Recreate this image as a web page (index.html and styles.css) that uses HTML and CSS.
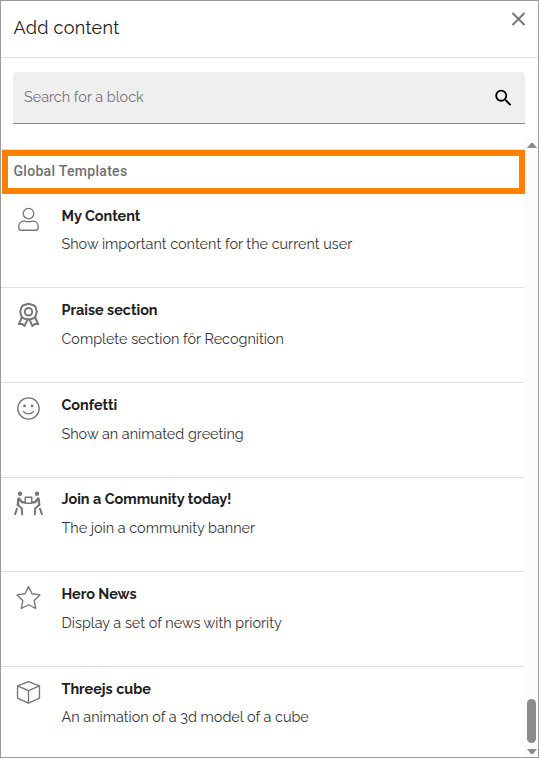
FILE: index.html
```
<!DOCTYPE html>
<html lang="en">
<head>
<meta charset="utf-8">
<title>Add content</title>
<link rel="stylesheet" href="styles.css">
</head>
<body>
<div class="dialog">
  <header class="header">
    <h1>Add content</h1>
    <svg class="close" viewBox="0 0 14 14"><path d="M1 1l12 12M13 1L1 13"/></svg>
  </header>
  <div class="search">
    <span class="placeholder">Search for a block</span>
    <svg class="search-icon" viewBox="0 0 24 24"><path d="M15.5 14h-.79l-.28-.27A6.47 6.47 0 0 0 16 9.5 6.5 6.5 0 1 0 9.5 16c1.61 0 3.09-.59 4.23-1.57l.27.28v.79l5 4.99L20.49 19l-4.99-5zm-6 0a4.5 4.5 0 1 1 0-9 4.5 4.5 0 0 1 0 9z"/></svg>
  </div>
  <div class="body">
    <main class="list">
      <div class="group">Global Templates</div>
      <section class="row">
        <svg class="icon" viewBox="0 0 28 24"><circle cx="14" cy="6.3" r="5.1"/><path d="M9.3 13.6h1.1c2.4 1 4.8 1 7.2 0h1.1c2.6 0 4.6 2.2 4.6 5v1.7c0 1.3-.8 2.1-2.1 2.1H6.8c-1.3 0-2.1-.8-2.1-2.1v-1.7c0-2.8 2-5 4.6-5z"/></svg>
        <div><h2>My Content</h2><p>Show important content for the current user</p></div>
      </section>
      <section class="row">
        <svg class="icon bold" viewBox="0 0 28 24"><path d="M14 1.6l2.5.7 2.5.7 1.8 1.8.6 2.3.6 2.3-.6 2.3-.6 2.2-1.8 1.7-2.5.7-2.5.6-2.5-.6-2.5-.7-1.8-1.7-.6-2.2L6 9.4l.6-2.3.6-2.300L9 3l2.500-.7z"/><circle cx="14" cy="9.400" r="3.600"/><path d="M7.600 14.900l-2.900 6.300 3.300-.1 2.200 2.100 2.800-6.300M20.400 14.900l2.900 6.300-3.300-.1-2.200 2.100-2.800-6.300"/></svg>
        <div><h2>Praise section</h2><p>Complete section för Recognition</p></div>
      </section>
      <section class="row">
        <svg class="icon" viewBox="0 0 28 24"><circle cx="14" cy="12" r="10.300"/><path d="M9.300 15c2.400 3 7 3 9.400 0"/><circle class="solid" cx="10.200" cy="9.500" r="1.300"/><circle class="solid" cx="17.500" cy="9.500" r="1.300"/></svg>
        <div><h2>Confetti</h2><p>Show an animated greeting</p></div>
      </section>
      <section class="row">
        <svg class="icon people" viewBox="0 0 28 24"><circle class="solid" cx="5.800" cy="2.600" r="2.100"/><circle class="solid" cx="22.200" cy="2.600" r="2.100"/><path class="torso" d="M4.200 7.500L3.700 13.300M4.800 7.200l3 3.700h2.200M23.800 7.500l.5 5.800M23.200 7.200l-3 3.700H18"/><path class="legs" d="M3.700 13.500l3.800 3.200.4 5.800M2.800 17l-1.700 5.300M24.300 13.500l-3.800 3.200-.4 5.800M25.200 17l1.700 5.300"/><path d="M10.900 6h6.200v5.700h-6.200z"/></svg>
        <div><h2>Join a Community today!</h2><p>The join a community banner</p></div>
      </section>
      <section class="row">
        <svg class="icon" viewBox="0 0 28 24"><path d="M14 1.500l3.400 6.900 7.700 1.100-5.600 5.400 1.400 7.700-6.900-3.600-6.900 3.600 1.400-7.700-5.600-5.400 7.700-1.100z"/></svg>
        <div><h2>Hero News</h2><p>Display a set of news with priority</p></div>
      </section>
      <section class="row">
        <svg class="icon" viewBox="0 0 28 24"><path d="M14 1.500l10.600 4.100v11.800L14 22.300 3.400 17.400V5.600zM3.400 5.600L14 10.300l10.600-4.700M14 10.300v12"/></svg>
        <div><h2>Threejs cube</h2><p>An animation of a 3d model of a cube</p></div>
      </section>
    </main>
    <div class="scrollbar">
      <svg viewBox="0 0 10 5"><path d="M0 5L4 0h2l4 5z"/></svg>
      <div class="thumb"></div>
      <svg viewBox="0 0 10 5"><path d="M0 0l4 5h2l4-5z"/></svg>
    </div>
  </div>
</div>
</body>
</html>
```
FILE: styles.css
```
* { box-sizing: border-box; }
body { margin: 0; font-family: Raleway, Lato, "Open Sans", sans-serif; color: #212121; background: #fff; }
h1, h2, p { margin: 0; white-space: nowrap; }
.dialog { width: 539px; height: 758px; border: 1px solid #9b9b9b; display: flex; flex-direction: column; overflow: hidden; }
.header { height: 57px; flex: none; border-bottom: 1px solid #dedede; padding: 0 13px 0 12.5px; display: flex; justify-content: space-between; }
h1 { font-size: 18px; line-height: 22px; font-weight: 400; padding-top: 16px; letter-spacing: .3px; }
.close { width: 15px; height: 14px; margin: 11px -1px 0 0; fill: none; stroke: #767676; stroke-width: 2; }
.search { height: 52px; flex: none; margin: 14px 13px 13px 12px; padding: 0 10px 0 11px; background: #efefef; border-bottom: 1px solid #8c8c8c; border-radius: 4px 4px 0 0; display: flex; align-items: center; justify-content: space-between; }
.placeholder { font-size: 14.4px; color: #757575; padding-bottom: 2px; }
.search-icon { width: 23px; height: 22px; }
.body { flex: 1; min-height: 0; display: flex; }
.list { width: 523px; flex: none; padding-top: 12px; display: flex; flex-direction: column; }
.group { height: 44px; flex: none; margin: 1px -1px -.25px 1px; border: 6px solid #ff8000; padding-left: 5.5px; font: 500 14px/31px Roboto, sans-serif; letter-spacing: .3px; color: #707070; box-shadow: 0 -1px #dedede; position: relative; z-index: 1; }
.row { height: 94.6px; flex: none; border-bottom: 1px solid #dedede; padding: 12.8px 0 0 13px; display: flex; gap: 18.5px; }
.row:last-child { border-bottom: 0; height: 88px; }
.icon { width: 29px; height: 25px; flex: none; margin-top: .4px; fill: none; stroke: #767676; stroke-width: 1.3; stroke-linejoin: round; stroke-linecap: round; }
.bold { stroke-width: 1.9; }
.solid { fill: #767676; stroke: none; }
.people { stroke-width: 1.5; }
.torso { stroke-width: 2.3; }
.legs { stroke-width: 1.9; }
h2 { font-size: 14.4px; line-height: 18px; font-weight: 700; }
.row p { font-size: 14.4px; line-height: 18px; margin-top: 10.8px; color: #363636; }
.scrollbar { width: 15px; flex: none; background: #fbfbfb; display: flex; flex-direction: column; align-items: center; padding: 6px 0 3px; }
.scrollbar svg { width: 10px; height: 5px; fill: #8b8b8b; }
.thumb { width: 9px; height: 44px; background: #8b8b8b; border-radius: 5px; margin: auto 0 6px; }
```
